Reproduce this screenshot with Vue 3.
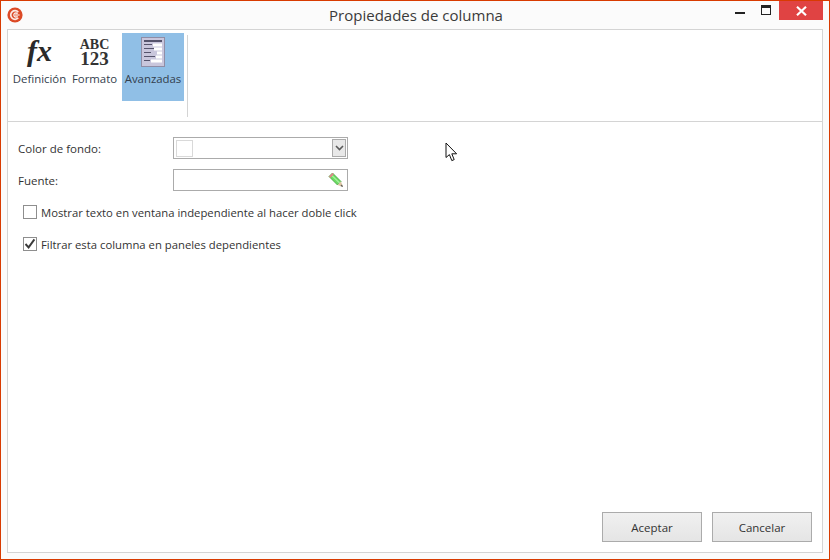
<script setup>
</script>

<template>
  <div class="window">
    <header class="titlebar">
      <svg class="logo" width="16" height="16" viewBox="0 0 16 16">
        <circle cx="8" cy="8" r="7.6" fill="#dc4a26" />
        <path d="M11.3 5.2 A4.3 4.3 0 1 0 11.3 10.8" fill="none" stroke="#fbe9e3" stroke-width="1.7" />
        <path d="M10.5 6.9 A2 2 0 1 0 10.5 9.1" fill="none" stroke="#fbe9e3" stroke-width="1.3" />
        <path d="M8 8 H12.6" stroke="#fbe9e3" stroke-width="1.2" />
      </svg>
      <h1 class="title">Propiedades de columna</h1>
      <div class="controls">
        <button class="ctl"><span class="min"></span></button>
        <button class="ctl"><span class="max"></span></button>
        <button class="close" aria-label="Cerrar">
          <svg width="11" height="10" viewBox="0 0 11 10"><path d="M1 .8 L10 9.2 M10 .8 L1 9.2" stroke="#fff" stroke-width="2.2" /></svg>
        </button>
      </div>
    </header>

    <main class="panel">
      <nav class="ribbon">
        <div class="tabs">
          <div class="tab tab-def">
            <span class="fx">fx</span>
            <span class="tab-label">Definición</span>
          </div>
          <div class="tab tab-fmt">
            <span class="abc"><span class="abc-a">ABC</span><span class="abc-b">123</span></span>
            <span class="tab-label">Formato</span>
          </div>
          <div class="tab tab-adv">
            <svg class="adv-icon" width="24" height="30" viewBox="0 0 24 30">
              <rect x=".5" y=".5" width="23" height="29" fill="#c9c6dc" stroke="#8f8da6" />
              <rect x="3" y="3" width="18" height="2" fill="#55536c" />
              <rect x="3" y="7" width="8" height="1" fill="#55536c" /><rect x="12" y="6.5" width="9" height="3" fill="#fff" />
              <rect x="3" y="11" width="10" height="1" fill="#55536c" /><rect x="13" y="10.5" width="8" height="3" fill="#fff" />
              <rect x="3" y="15" width="7" height="1" fill="#55536c" /><rect x="16" y="14.5" width="5" height="3" fill="#fff" />
              <rect x="3" y="19" width="11" height="1" fill="#55536c" /><rect x="15" y="18.5" width="6" height="3" fill="#fff" />
              <rect x="3" y="23" width="6" height="1" fill="#55536c" /><rect x="10" y="22.5" width="11" height="3" fill="#fff" />
            </svg>
            <span class="tab-label">Avanzadas</span>
          </div>
        </div>
        <div class="sep"></div>
      </nav>

      <section class="form">
        <div class="row">
          <label class="lbl">Color de fondo:</label>
          <div class="field">
            <span class="swatch"></span>
            <span class="arrow">
              <svg width="9" height="6" viewBox="0 0 9 6"><path d="M1 1 L4.5 4.5 L8 1" fill="none" stroke="#5a5a5a" stroke-width="1.6" /></svg>
            </span>
          </div>
        </div>
        <div class="row row-font">
          <label class="lbl">Fuente:</label>
          <div class="field">
            <svg class="pencil" width="16" height="16" viewBox="0 0 16 16">
              <path d="M1 4.5 L4.5 1 L13 9.5 L9.5 13 Z" fill="#6cdc62" stroke="#3f9e3c" stroke-width=".8" />
              <path d="M4 3.6 L11.6 11" stroke="#a8f0a0" stroke-width="1.2" />
              <path d="M1 4.5 L4.5 1 L5.8 2.3 L2.3 5.8 Z" fill="#e8808a" />
              <path d="M9.5 13 L13 9.5 L15 15 Z" fill="#dcc6a4" />
              <path d="M12.4 14 L14 12.4 L15 15 Z" fill="#555" />
            </svg>
          </div>
        </div>
        <div class="check-row first">
          <span class="box"></span>
          <span class="check-label">Mostrar texto en ventana independiente al hacer doble click</span>
        </div>
        <div class="check-row">
          <span class="box">
            <svg width="12" height="12" viewBox="0 0 12 12"><path d="M1.5 6 L4.6 9.4 L10.4 1.4" fill="none" stroke="#3a3a3a" stroke-width="1.9" /></svg>
          </span>
          <span class="check-label">Filtrar esta columna en paneles dependientes</span>
        </div>
      </section>

      <footer class="actions">
        <button class="btn">Aceptar</button>
        <button class="btn">Cancelar</button>
      </footer>
    </main>

    <svg class="cursor" width="14" height="21" viewBox="0 0 14 21">
      <path d="M1 1 L1 15.5 L4.4 12.6 L6.8 18.6 L9.2 17.6 L6.8 11.8 L11.6 11.8 Z" fill="#fff" stroke="#111" stroke-width="1" />
    </svg>
  </div>
</template>

<style>
html, body { margin: 0; padding: 0; background: #fff; }
</style>

<style scoped>
.window {
  position: relative;
  box-sizing: border-box;
  width: 830px;
  height: 560px;
  border: 1px solid #d83b01;
  background: #fbfbfb;
  display: flex;
  flex-direction: column;
  font-family: "Open Sans", "Noto Sans", sans-serif;
  color: #2f2f2f;
  overflow: hidden;
}
.titlebar {
  position: relative;
  height: 28px;
  flex: none;
  display: flex;
  align-items: flex-start;
}
.logo { position: absolute; left: 6px; top: 6px; }
.title {
  flex: 1;
  margin: 0;
  padding-left: 2px;
  text-align: center;
  font-size: 15px;
  font-weight: 400;
  line-height: 28px;
  color: #3a3a3a;
}
.controls { position: absolute; right: 0; top: 0; display: flex; }
.ctl {
  width: 29px; height: 19px; padding: 0; border: 0; background: none;
  position: relative;
}
.min { position: absolute; left: 14px; top: 11px; width: 10px; height: 2px; background: #222; }
.max { position: absolute; left: 11px; top: 4px; width: 10px; height: 10px; box-sizing: border-box; border: 1px solid #222; border-top-width: 3px; }
.close {
  width: 44px; height: 19px; margin-right: 6px; padding: 0; border: 0;
  background: #e04343; display: flex; align-items: center; justify-content: center;
}
.panel {
  flex: 1;
  margin: 0 6px 6px;
  border: 1px solid #d4d4d4;
  background: #fff;
  display: flex;
  flex-direction: column;
  min-height: 0;
}
.ribbon {
  flex: none;
  border-bottom: 1px solid #d4d4d4;
  display: flex;
  box-sizing: border-box;
  height: 92px;
}
.tabs { display: flex; align-items: flex-start; margin-left: 4px; margin-top: 3px; }
.tab {
  height: 68px; display: flex; flex-direction: column; align-items: center;
  box-sizing: border-box;
}
.tab-def { width: 55px; }
.tab-fmt { width: 55px; }
.tab-adv { width: 62px; background: #90bfe6; }
.tab-label { font-size: 11.4px; line-height: 15px; color: #33404d; white-space: nowrap; }
.fx {
  font: italic bold 30px/36px "Liberation Serif", serif;
  color: #2a2a2a; height: 38px;
}
.abc { display: flex; flex-direction: column; align-items: center; height: 38px; padding-top: 6px; box-sizing: border-box; font-family: "Liberation Serif", serif; font-weight: 700; color: #333; }
.abc-a { font-size: 14px; line-height: 12px; }
.abc-b { font-size: 19px; line-height: 16px; }
.adv-icon { margin-top: 4px; margin-bottom: 4px; }
.sep { width: 1px; height: 82px; background: #d4d4d4; margin: 5px 0 0 3px; }
.form { flex: 1; display: flex; flex-direction: column; padding-top: 15px; }
.row { display: flex; align-items: center; height: 22px; }
.row-font { margin-top: 10px; }
.lbl { width: 155px; margin-left: 10px; font-size: 11.5px; color: #333; }
.field {
  position: relative; box-sizing: border-box; width: 175px; height: 22px;
  border: 1px solid #ababab; background: #fff;
  display: flex; align-items: center; justify-content: space-between;
}
.swatch { width: 15px; height: 15px; margin-left: 2px; border: 1px solid #d9d9d9; }
.arrow {
  width: 14px; height: 18px; margin-right: 1px; box-sizing: border-box;
  border: 1px solid #ababab; background: #e8e8e8;
  display: flex; align-items: center; justify-content: center;
}
.pencil { margin-left: auto; margin-right: 3px; }
.check-row { display: flex; align-items: center; height: 14px; margin-left: 15px; margin-top: 18px; }
.check-row.first { margin-top: 14px; }
.box {
  width: 14px; height: 14px; box-sizing: border-box; border: 1px solid #8e8e8e; background: #fff;
  display: flex; align-items: center; justify-content: center; flex: none;
}
.check-label { margin-left: 4px; font-size: 11.3px; color: #333; white-space: nowrap; }
.actions { margin-top: auto; display: flex; justify-content: flex-end; gap: 10px; padding: 0 10px 10px 0; }
.btn {
  width: 100px; height: 30px; padding: 0; border: 1px solid #ababab;
  background: linear-gradient(#f0f0f0, #e5e5e5);
  font: 11.5px "Open Sans", "Noto Sans", sans-serif; color: #333;
}
.cursor { position: absolute; left: 444px; top: 141px; }
</style>
